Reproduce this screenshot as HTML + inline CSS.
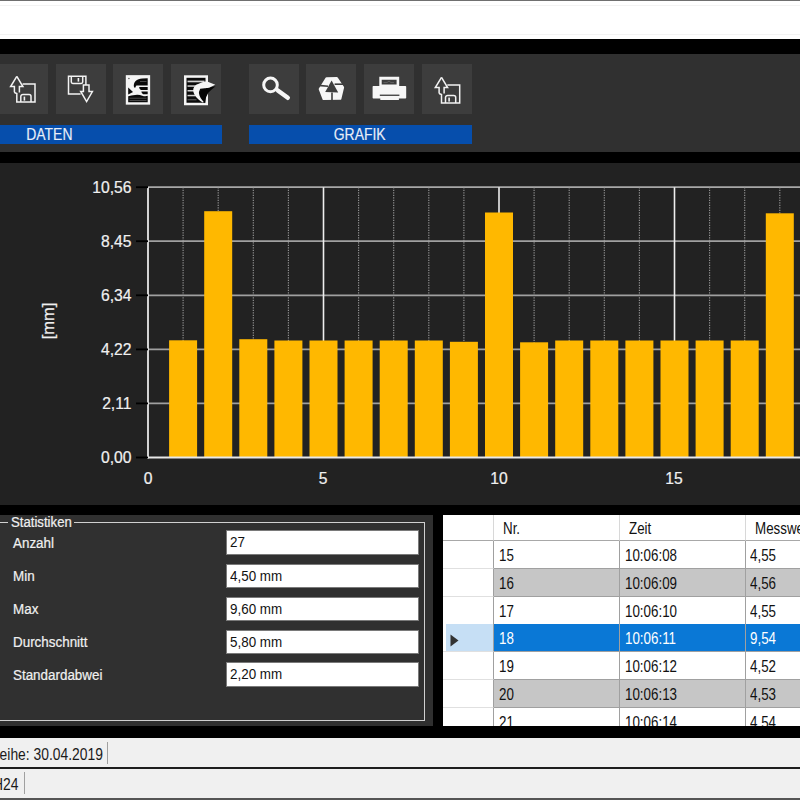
<!DOCTYPE html>
<html><head><meta charset="utf-8">
<style>
*{margin:0;padding:0;box-sizing:border-box}
html,body{width:800px;height:800px;overflow:hidden;background:#000;font-family:"Liberation Sans",sans-serif}
.abs{position:absolute}
.t{display:inline-block;white-space:nowrap;transform:scaleX(0.81);transform-origin:left center}
#stats .t{transform:scaleX(0.865)}
#top{left:0;top:0;width:800px;height:38.8px;background:#fff;border-top:1.8px solid #707070}
#tb{left:0;top:53.75px;width:800px;height:97.75px;background:#303030}
.btn{position:absolute;top:10px;width:50px;height:50.25px;background:#3d3d3d}
.grp{position:absolute;top:71px;height:19.5px;background:#064eac;color:#e8eef8;font-size:16.5px;line-height:19px;text-align:center}
.grp .g{display:inline-block;transform:scaleX(0.845);-webkit-text-stroke:0.15px #e8eef8}
#chart{left:0;top:163.3px;width:800px;height:342.2px;background:#222222}
.yl{position:absolute;width:60px;text-align:right;color:#f0f0f0;-webkit-text-stroke:0.22px #f0f0f0;font-size:16.5px;line-height:16px;transform:translateX(0.5px) scaleX(0.95);transform-origin:right center}
.xl{position:absolute;width:40px;text-align:center;color:#f0f0f0;-webkit-text-stroke:0.22px #f0f0f0;font-size:16.5px;line-height:16px;transform:scaleX(0.95)}
#stats{left:0;top:515px;width:433px;height:210.5px;background:#303030}
#gb{position:absolute;left:-4px;top:6.7px;width:428.8px;height:199.4px;border:1.6px solid #d0d0d0}
#gbt{position:absolute;left:8px;top:0px;padding:0 3px;background:#303030;color:#f0f0f0;-webkit-text-stroke:0.22px #f0f0f0;font-size:15.5px;line-height:14px;height:14px;width:66px;overflow:visible}
#gbt .t{transform:scaleX(0.85) translateY(0px)}
.sl{position:absolute;left:13px;color:#f0f0f0;-webkit-text-stroke:0.22px #f0f0f0;font-size:15.5px;line-height:16px}
.tbx{position:absolute;left:226px;width:193px;height:24.5px;background:#fff;border:1px solid #7a7a7a;color:#111;font-size:15.5px;line-height:22px;padding-left:3px}
#tbl{left:442.5px;top:515px;width:358px;height:211px;background:#fff;overflow:hidden}
.row{position:absolute;left:0;width:358px;height:28px;font-size:16.5px;color:#111}
.c{position:absolute;top:0;height:28px;line-height:28px;border-right:1px solid #a0a0a0;border-bottom:1px solid #a0a0a0}
.hdr{position:absolute;left:0;width:358px;height:26px;font-size:16.5px;color:#111}
.hc{position:absolute;top:0;height:26px;line-height:27px;background:#fff;border-right:1px solid #d8d8d8;border-bottom:1px solid #a8a8a8}
.rh{position:absolute;left:0;top:0;width:51px;height:28px;background:#fff;border-right:1px solid #a0a0a0;border-bottom:1px solid #e0e0e0}
#sb1{left:0;top:737.8px;width:800px;height:31.2px;background:#f0f0f0;border-bottom:2.2px solid #1e1e1e}
#sb2{left:0;top:769px;width:800px;height:31px;background:#f0f0f0;border-bottom:2px solid #555}
.sbt{white-space:nowrap;font-size:16.5px;line-height:22px;color:#1a1a1a;transform:scaleX(0.84);transform-origin:right center}
</style></head><body>
<div id="top" class="abs"><div class="abs" style="left:0;top:3.5px;width:800px;height:1px;background:#f3f3f3"></div><div class="abs" style="left:0;top:32.5px;width:800px;height:1px;background:#f3f3f3"></div></div>
<div id="tb" class="abs">
  <div class="btn" style="left:-2px"></div>
  <div class="btn" style="left:56px"></div>
  <div class="btn" style="left:113px"></div>
  <div class="btn" style="left:171px"></div>
  <div class="btn" style="left:249px"></div>
  <div class="btn" style="left:306px"></div>
  <div class="btn" style="left:363.5px"></div>
  <div class="btn" style="left:422px"></div>
  <div class="grp" style="left:0;width:222px"><div class="abs" style="left:-123.8px;width:347px;top:0"><span class="g">DATEN</span></div></div>
  <div class="grp" style="left:249px;width:223px;padding-right:2px"><span class="g">GRAFIK</span></div>
</div>
<svg class="abs" style="left:0;top:0" width="800" height="151" viewBox="0 0 800 151">
<g id="ic1" fill="none" stroke="#f2f2f2" stroke-width="1.5" stroke-linejoin="miter">
  <path d="M16.8,76.3 L10.6,86.6 L14.4,86.6 L14.4,91.8 Q14.6,93 16.8,93.5 L16.8,102 L35,102 L35,84 L22.6,84"/>
  <path d="M16.8,76.3 L22.9,86.6 L19.4,86.6 L19.4,92.5"/>
  <path d="M20.8,102 L20.8,96.5 Q21,94.4 23,94.4 L29,94.4 Q31,94.4 31,96.5 L31,102"/>
  <rect x="23.6" y="96.6" width="1.6" height="4" fill="#f2f2f2" stroke="none"/>
</g>
<g transform="translate(424.7,1)">
<g fill="none" stroke="#f2f2f2" stroke-width="1.5" stroke-linejoin="miter">
  <path d="M16.8,76.3 L10.6,86.6 L14.4,86.6 L14.4,91.8 Q14.6,93 16.8,93.5 L16.8,102 L35,102 L35,84 L22.6,84"/>
  <path d="M16.8,76.3 L22.9,86.6 L19.4,86.6 L19.4,92.5"/>
  <path d="M20.8,102 L20.8,96.5 Q21,94.4 23,94.4 L29,94.4 Q31,94.4 31,96.5 L31,102"/>
  <rect x="23.6" y="96.6" width="1.6" height="4" fill="#f2f2f2" stroke="none"/>
</g></g>
<g fill="none" stroke="#f2f2f2" stroke-width="1.5">
  <path d="M80.6,94 L68.5,94 L68.5,76.3 L85.9,76.3 L85.9,84.9"/>
  <path d="M83.4,84.9 L89,84.9 L89,91.5 L92.4,91.5 L86.6,101.6 L80.7,91.5 L83.4,91.5 Z"/>
  <path d="M71.3,76.3 L71.3,82 Q71.3,83.4 72.8,83.4 L81.2,83.4 Q82.7,83.4 82.7,82 L82.7,76.3"/>
  <rect x="77.6" y="78" width="1.6" height="3.6" fill="#f2f2f2" stroke="none"/>
</g>
<!-- doc icon 3 -->
<rect x="127.05" y="76.4" width="21.85" height="27" fill="#f4f4f4" stroke="#f4f4f4" stroke-width="2.5"/>
<g fill="#0a0a0a">
  <path d="M134.07,87.54 C132.8,81.9 136.9,78.76 142.27,78.53 L147.7,78.3 L147.7,85.5 L136.4,85.5 Q135.5,86.4 135.5,87.54 Z"/>
  <path d="M139.1,87.1 L147.7,87.1 L147.7,89.93 L140.9,89.93 Q139.1,89.1 139.1,87.1 Z"/>
  <path d="M141.37,91.46 L147.7,91.46 L147.7,94.3 L143.17,94.3 Q141.37,93.17 141.37,91.46 Z"/>
  <path d="M128.2,87.54 L133.04,92.05 L128.2,94.6 Z"/>
  <path d="M128.2,96.32 Q131,95.42 135.06,94.97 Q139.1,94.52 142.27,95.65 Q144.97,96.55 147.7,95.87 L147.7,102.3 L128.2,102.3 Z"/>
</g>
<g fill="#5a5a5a">
  <rect x="129.5" y="97.8" width="17" height="0.8"/>
  <rect x="129.5" y="100.1" width="17" height="0.8"/>
  <rect x="140" y="81.1" width="6.5" height="0.8"/>
  <circle cx="128.9" cy="78.5" r="0.8"/>
</g>
<!-- doc icon 4 -->
<rect x="185.25" y="76.55" width="21.5" height="27.45" fill="#0a0a0a" stroke="#f4f4f4" stroke-width="2.5"/>
<g fill="#d0d0d0">
  <rect x="187.5" y="80.6" width="17" height="1.7"/>
  <rect x="187.5" y="85.3" width="12" height="1.5"/>
  <rect x="187.5" y="90" width="8" height="1.5"/>
  <rect x="187.5" y="94.8" width="8" height="1.5"/>
</g>
<rect x="187.5" y="99.3" width="9" height="1" fill="#666"/>
<path d="M204.7,88.15 L215.6,86.2 Q211,89.8 208.3,92.8 Q205.6,96.8 204.6,103.2 Q200.6,99 200.2,94 Q200,90 204.7,88.15 Z" fill="#050505"/>
<path d="M202.8,102.6 C196,98.5 192.3,93 193.4,88.5 Q195,84.5 198.05,83.9 Q202,82 206.6,81.3 L215.3,84.8 L209,87.7 Q206,88.2 204.7,88.15 L200.2,88.7 Q198.6,92 199,93.6 Q199.5,97.5 203.6,101.8 Z" fill="#f4f4f4"/>
<!-- magnifier -->
<g fill="none" stroke="#f6f6f6">
  <circle cx="270.5" cy="84.9" r="6.8" stroke-width="3"/>
  <line x1="277.8" y1="90.4" x2="287.8" y2="97.8" stroke-width="4.4" stroke-linecap="round"/>
</g>
<!-- recycle -->
<polygon points="326.5,78.3 336.8,78.1 343,87.4 340.3,98.7 323.6,99 319.8,89.2" fill="#f6f6f6" stroke="#f6f6f6" stroke-width="2.2" stroke-linejoin="round"/>
<polygon points="331.6,80.6 325.2,92 338.2,92.6" fill="#3d3d3d"/>
<g stroke="#3d3d3d" stroke-width="1.6">
  <line x1="318" y1="85.4" x2="328" y2="86.2"/>
  <line x1="334.6" y1="84.2" x2="345" y2="84.2"/>
  <line x1="332" y1="92.4" x2="332" y2="102"/>
</g>
<!-- printer -->
<g fill="#f6f6f6">
  <path d="M379.3,86.6 L379.3,76.8 L399.2,76.8 L399.2,86.6 Z M381.7,84.5 L396.6,84.5 L396.6,79.8 L381.7,79.8 Z" fill-rule="evenodd"/>
  <rect x="372.6" y="85.9" width="33.6" height="12.6" rx="0.8"/>
  <rect x="380.3" y="95.8" width="18.6" height="4.2"/>
</g>
<rect x="379.8" y="94.6" width="19.6" height="1.3" fill="#3b3b3b"/>
<path d="M383.5,82.6 L387,82.6 L389,81 L391,82.6 L394,82.6" stroke="#777" stroke-width="0.6" fill="none"/>
</svg>

<div id="chart" class="abs">
  <svg class="abs" style="left:0;top:-163.3px" width="800" height="505" viewBox="0 0 800 505">
<line x1="148.0" y1="403.4" x2="800" y2="403.4" stroke="#a0a0a0" stroke-width="1.7"/>
<line x1="148.0" y1="349.4" x2="800" y2="349.4" stroke="#a0a0a0" stroke-width="1.7"/>
<line x1="148.0" y1="295.3" x2="800" y2="295.3" stroke="#a0a0a0" stroke-width="1.7"/>
<line x1="148.0" y1="241.2" x2="800" y2="241.2" stroke="#a0a0a0" stroke-width="1.7"/>
<line x1="148.0" y1="187.2" x2="800" y2="187.2" stroke="#a8a8a8" stroke-width="1.8"/>
<line x1="183.1" y1="187.2" x2="183.1" y2="457.5" stroke="#9a9a9a" stroke-width="1.1" stroke-dasharray="1.2 1.3"/>
<line x1="218.2" y1="187.2" x2="218.2" y2="457.5" stroke="#9a9a9a" stroke-width="1.1" stroke-dasharray="1.2 1.3"/>
<line x1="253.3" y1="187.2" x2="253.3" y2="457.5" stroke="#9a9a9a" stroke-width="1.1" stroke-dasharray="1.2 1.3"/>
<line x1="288.4" y1="187.2" x2="288.4" y2="457.5" stroke="#9a9a9a" stroke-width="1.1" stroke-dasharray="1.2 1.3"/>
<line x1="323.5" y1="187.2" x2="323.5" y2="457.5" stroke="#eeeeee" stroke-width="1.6"/>
<line x1="358.6" y1="187.2" x2="358.6" y2="457.5" stroke="#9a9a9a" stroke-width="1.1" stroke-dasharray="1.2 1.3"/>
<line x1="393.7" y1="187.2" x2="393.7" y2="457.5" stroke="#9a9a9a" stroke-width="1.1" stroke-dasharray="1.2 1.3"/>
<line x1="428.8" y1="187.2" x2="428.8" y2="457.5" stroke="#9a9a9a" stroke-width="1.1" stroke-dasharray="1.2 1.3"/>
<line x1="463.9" y1="187.2" x2="463.9" y2="457.5" stroke="#9a9a9a" stroke-width="1.1" stroke-dasharray="1.2 1.3"/>
<line x1="499.0" y1="187.2" x2="499.0" y2="457.5" stroke="#eeeeee" stroke-width="1.6"/>
<line x1="534.1" y1="187.2" x2="534.1" y2="457.5" stroke="#9a9a9a" stroke-width="1.1" stroke-dasharray="1.2 1.3"/>
<line x1="569.2" y1="187.2" x2="569.2" y2="457.5" stroke="#9a9a9a" stroke-width="1.1" stroke-dasharray="1.2 1.3"/>
<line x1="604.3" y1="187.2" x2="604.3" y2="457.5" stroke="#9a9a9a" stroke-width="1.1" stroke-dasharray="1.2 1.3"/>
<line x1="639.4" y1="187.2" x2="639.4" y2="457.5" stroke="#9a9a9a" stroke-width="1.1" stroke-dasharray="1.2 1.3"/>
<line x1="674.5" y1="187.2" x2="674.5" y2="457.5" stroke="#eeeeee" stroke-width="1.6"/>
<line x1="709.6" y1="187.2" x2="709.6" y2="457.5" stroke="#9a9a9a" stroke-width="1.1" stroke-dasharray="1.2 1.3"/>
<line x1="744.7" y1="187.2" x2="744.7" y2="457.5" stroke="#9a9a9a" stroke-width="1.1" stroke-dasharray="1.2 1.3"/>
<line x1="779.8" y1="187.2" x2="779.8" y2="457.5" stroke="#9a9a9a" stroke-width="1.1" stroke-dasharray="1.2 1.3"/>
<rect x="169.1" y="340.3" width="28" height="117.2" fill="#ffb800"/>
<rect x="204.2" y="211.2" width="28" height="246.3" fill="#ffb800"/>
<rect x="239.3" y="339.2" width="28" height="118.3" fill="#ffb800"/>
<rect x="274.4" y="340.5" width="28" height="117.0" fill="#ffb800"/>
<rect x="309.5" y="340.5" width="28" height="117.0" fill="#ffb800"/>
<rect x="344.6" y="340.5" width="28" height="117.0" fill="#ffb800"/>
<rect x="379.7" y="340.5" width="28" height="117.0" fill="#ffb800"/>
<rect x="414.8" y="340.5" width="28" height="117.0" fill="#ffb800"/>
<rect x="449.9" y="341.8" width="28" height="115.7" fill="#ffb800"/>
<rect x="485.0" y="212.5" width="28" height="245.0" fill="#ffb800"/>
<rect x="520.1" y="342.3" width="28" height="115.2" fill="#ffb800"/>
<rect x="555.2" y="340.5" width="28" height="117.0" fill="#ffb800"/>
<rect x="590.3" y="340.5" width="28" height="117.0" fill="#ffb800"/>
<rect x="625.4" y="340.5" width="28" height="117.0" fill="#ffb800"/>
<rect x="660.5" y="340.5" width="28" height="117.0" fill="#ffb800"/>
<rect x="695.6" y="340.5" width="28" height="117.0" fill="#ffb800"/>
<rect x="730.7" y="340.5" width="28" height="117.0" fill="#ffb800"/>
<rect x="765.8" y="213.3" width="28" height="244.2" fill="#ffb800"/>
<line x1="148.0" y1="187.2" x2="148.0" y2="458.5" stroke="#e8e8e8" stroke-width="1.8"/>
<line x1="147.0" y1="457.5" x2="800" y2="457.5" stroke="#e8e8e8" stroke-width="1.8"/>
<line x1="136" y1="457.5" x2="148.0" y2="457.5" stroke="#000" stroke-width="1.8"/>
<line x1="136" y1="403.4" x2="148.0" y2="403.4" stroke="#000" stroke-width="1.8"/>
<line x1="136" y1="349.4" x2="148.0" y2="349.4" stroke="#000" stroke-width="1.8"/>
<line x1="136" y1="295.3" x2="148.0" y2="295.3" stroke="#000" stroke-width="1.8"/>
<line x1="136" y1="241.2" x2="148.0" y2="241.2" stroke="#000" stroke-width="1.8"/>
<line x1="136" y1="187.2" x2="148.0" y2="187.2" stroke="#000" stroke-width="1.8"/>
  </svg>
  <div class="yl" style="left:71px;top:16px">10,56</div>
  <div class="yl" style="left:71px;top:70px">8,45</div>
  <div class="yl" style="left:71px;top:124px">6,34</div>
  <div class="yl" style="left:71px;top:178px">4,22</div>
  <div class="yl" style="left:71px;top:232px">2,11</div>
  <div class="yl" style="left:71px;top:286px">0,00</div>
  <div class="xl" style="left:128px;top:306.5px">0</div>
  <div class="xl" style="left:303px;top:306.5px">5</div>
  <div class="xl" style="left:479px;top:306.5px">10</div>
  <div class="xl" style="left:654px;top:306.5px">15</div>
  <div class="abs" style="left:28px;top:149.2px;width:40px;height:18px;color:#f0f0f0;-webkit-text-stroke:0.22px #f0f0f0;font-size:16.5px;line-height:18px;transform:rotate(-90deg);text-align:center">[mm]</div>
</div>
<div id="stats" class="abs">
  <div id="gb"></div>
  <div id="gbt"><span class="t">Statistiken</span></div>
  <div class="sl" style="top:20px"><span class="t">Anzahl</span></div>
  <div class="sl" style="top:53px"><span class="t">Min</span></div>
  <div class="sl" style="top:86px"><span class="t">Max</span></div>
  <div class="sl" style="top:119px"><span class="t">Durchschnitt</span></div>
  <div class="sl" style="top:152px"><span class="t">Standardabwei</span></div>
  <div class="tbx" style="top:15px"><span class="t">27</span></div>
  <div class="tbx" style="top:48.5px"><span class="t">4,50 mm</span></div>
  <div class="tbx" style="top:81.5px"><span class="t">9,60 mm</span></div>
  <div class="tbx" style="top:114.5px"><span class="t">5,80 mm</span></div>
  <div class="tbx" style="top:147px"><span class="t">2,20 mm</span></div>
</div>
<div id="tbl" class="abs">
<div class="hdr" style="top:0"><div class="hc" style="left:0;width:51px"></div><div class="hc" style="left:51px;width:126px;padding-left:9.5px"><span class="t">Nr.</span></div><div class="hc" style="left:177px;width:126px;padding-left:9px"><span class="t">Zeit</span></div><div class="hc" style="left:303px;width:80px;padding-left:9.5px"><span class="t">Messwert</span></div></div>
<div class="row" style="top:26.00px"><div class="rh"></div><div class="c" style="left:51px;width:126px;background:#ffffff;color:#111;padding-left:5.5px"><span class="t">15</span></div><div class="c" style="left:177px;width:126px;background:#ffffff;color:#111;padding-left:5px"><span class="t">10:06:08</span></div><div class="c" style="left:303px;width:80px;background:#ffffff;color:#111;padding-left:4.5px"><span class="t">4,55</span></div></div>
<div class="row" style="top:53.75px"><div class="rh"></div><div class="c" style="left:51px;width:126px;background:#c6c6c6;color:#111;padding-left:5.5px"><span class="t">16</span></div><div class="c" style="left:177px;width:126px;background:#c6c6c6;color:#111;padding-left:5px"><span class="t">10:06:09</span></div><div class="c" style="left:303px;width:80px;background:#c6c6c6;color:#111;padding-left:4.5px"><span class="t">4,56</span></div></div>
<div class="row" style="top:81.50px"><div class="rh"></div><div class="c" style="left:51px;width:126px;background:#ffffff;color:#111;padding-left:5.5px"><span class="t">17</span></div><div class="c" style="left:177px;width:126px;background:#ffffff;color:#111;padding-left:5px"><span class="t">10:06:10</span></div><div class="c" style="left:303px;width:80px;background:#ffffff;color:#111;padding-left:4.5px"><span class="t">4,55</span></div></div>
<div class="row" style="top:109.25px"><div class="rh" style="background:linear-gradient(to right,#fff 2.5px,#c6dff5 2.5px)"><svg width="10" height="14" style="position:absolute;left:7.5px;top:9.5px"><path d="M0.5 0.5 L8.5 6.5 L0.5 12.5Z" fill="#333"/></svg></div><div class="c" style="left:51px;width:126px;background:#0a78d6;color:#fff;padding-left:5.5px"><span class="t">18</span></div><div class="c" style="left:177px;width:126px;background:#0a78d6;color:#fff;padding-left:5px"><span class="t">10:06:11</span></div><div class="c" style="left:303px;width:80px;background:#0a78d6;color:#fff;padding-left:4.5px"><span class="t">9,54</span></div></div>
<div class="row" style="top:137.00px"><div class="rh"></div><div class="c" style="left:51px;width:126px;background:#ffffff;color:#111;padding-left:5.5px"><span class="t">19</span></div><div class="c" style="left:177px;width:126px;background:#ffffff;color:#111;padding-left:5px"><span class="t">10:06:12</span></div><div class="c" style="left:303px;width:80px;background:#ffffff;color:#111;padding-left:4.5px"><span class="t">4,52</span></div></div>
<div class="row" style="top:164.75px"><div class="rh"></div><div class="c" style="left:51px;width:126px;background:#c6c6c6;color:#111;padding-left:5.5px"><span class="t">20</span></div><div class="c" style="left:177px;width:126px;background:#c6c6c6;color:#111;padding-left:5px"><span class="t">10:06:13</span></div><div class="c" style="left:303px;width:80px;background:#c6c6c6;color:#111;padding-left:4.5px"><span class="t">4,53</span></div></div>
<div class="row" style="top:192.50px"><div class="rh"></div><div class="c" style="left:51px;width:126px;background:#ffffff;color:#111;padding-left:5.5px"><span class="t">21</span></div><div class="c" style="left:177px;width:126px;background:#ffffff;color:#111;padding-left:5px"><span class="t">10:06:14</span></div><div class="c" style="left:303px;width:80px;background:#ffffff;color:#111;padding-left:4.5px"><span class="t">4,54</span></div></div>
</div>
<div id="sb1" class="abs"><div class="abs sbt" style="right:697.5px;top:5.5px">Messreihe: 30.04.2019</div><div class="abs" style="left:107px;top:4.5px;width:1.2px;height:22px;background:#a0a0a0"></div></div>
<div id="sb2" class="abs"><div class="abs sbt" style="right:781.3px;top:4px">Messgerät: H24</div><div class="abs" style="left:24px;top:3px;width:1.2px;height:22px;background:#a0a0a0"></div></div>
</body></html>
